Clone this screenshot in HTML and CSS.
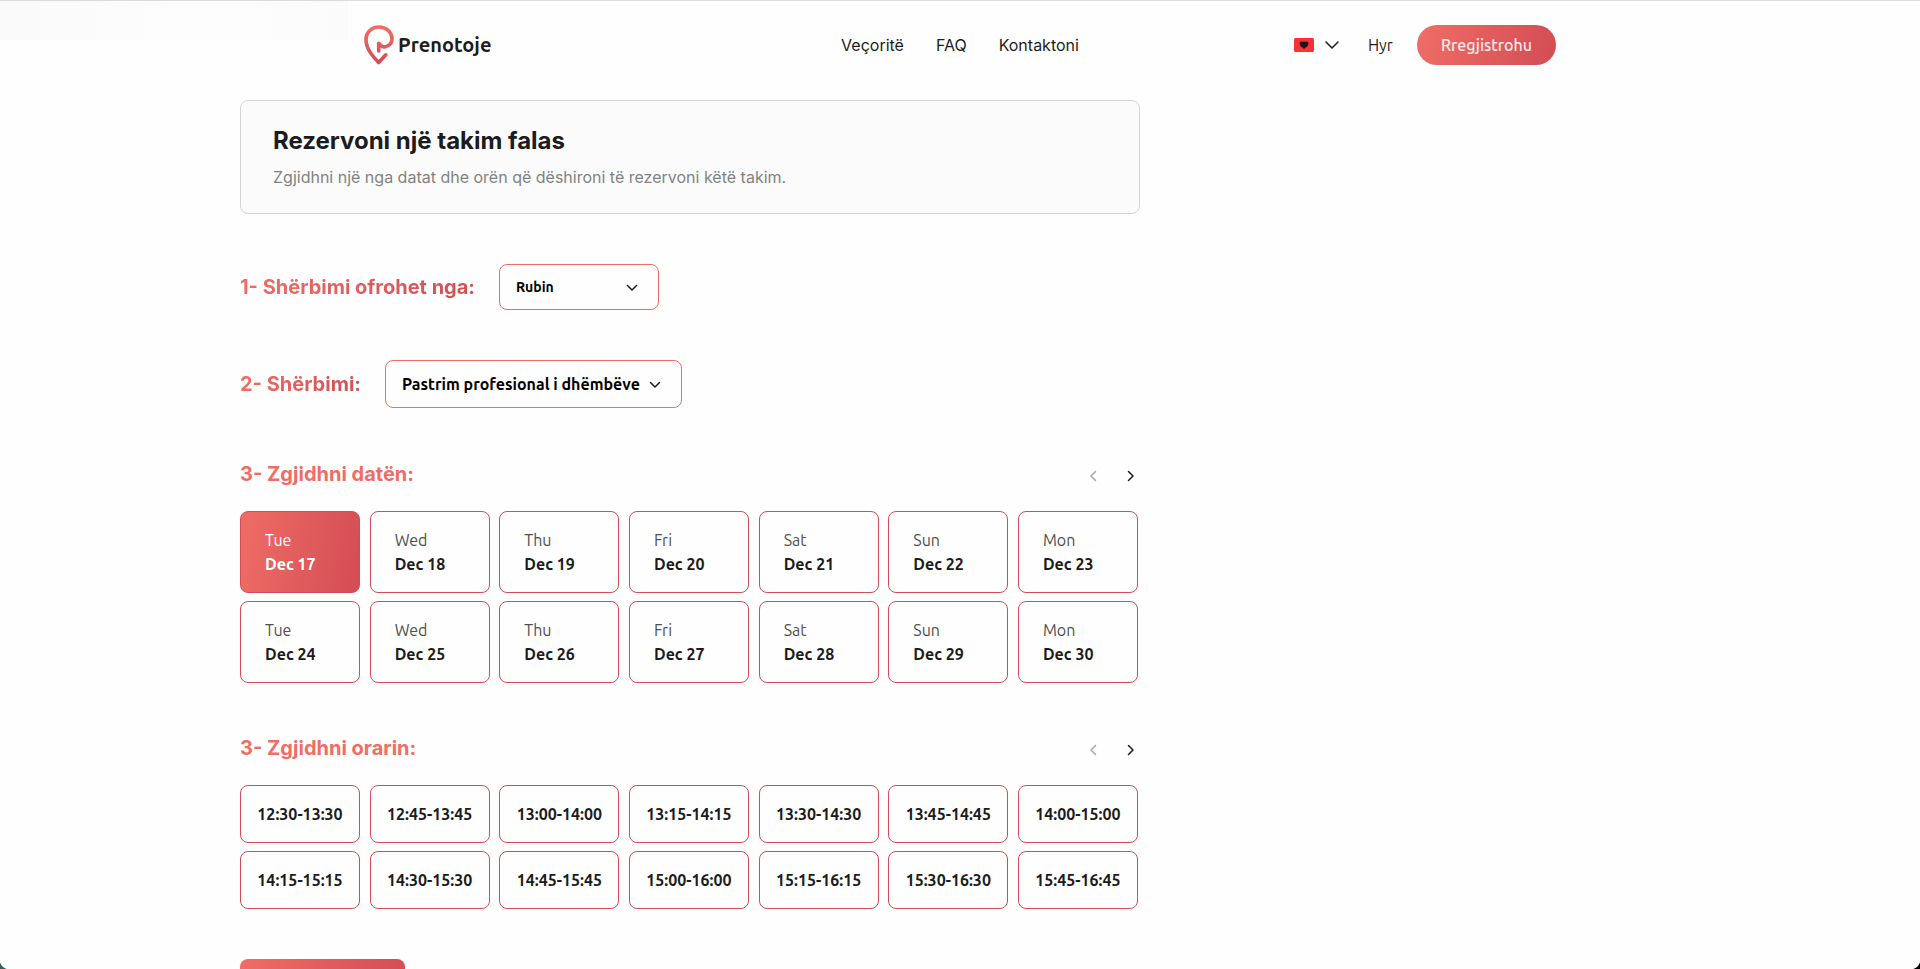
FILE: index.html
```html
<!DOCTYPE html>
<html lang="sq">
<head>
<meta charset="utf-8">
<meta name="viewport" content="width=device-width, initial-scale=1">
<title>Prenotoje</title>
<link rel="stylesheet" href="styles.css">
</head>
<body>
<div class="page">
  <header class="header">
    <div class="header-inner">
      <a class="brand" href="#">
        <svg class="brand-mark" viewBox="0 0 30 40" aria-hidden="true">
          <defs><linearGradient id="pin" x1="0" y1="0" x2="0" y2="1"><stop offset="0" stop-color="#ef6d66"/><stop offset="1" stop-color="#d34d54"/></linearGradient></defs>
          <path fill="none" stroke="url(#pin)" stroke-width="3.600" stroke-linecap="round" stroke-linejoin="round" d="M14.700 26V18.200L18 21.600Q21 22.500 24 20.700Q28 18.500 28 13.500C27.500 6.500 22 2 15 2C7.500 2 2 7.500 2 14.500C2 24 8.500 31 14.700 37.500L21.800 29.800"/>
        </svg>
        <span>Prenotoje</span>
      </a>
      <nav class="nav">
        <a href="#">Veçoritë</a>
        <a href="#">FAQ</a>
        <a href="#">Kontaktoni</a>
      </nav>
      <div class="actions">
        <button class="lang" type="button" aria-label="Shqip">
          <svg width="20" height="14" viewBox="0 0 20 14" aria-hidden="true"><rect width="20" height="14" rx="1.500" fill="#ff2f36"/><path fill="#171717" d="M5.500 4.500L7.500 3.500L9 4L10 3L11 4L12.500 3.500L14.500 4.500L14 7.500L12.500 9L11.500 9.500L10 11L8.500 9.500L7.500 9L6 7.500Z"/></svg>
          <svg width="14" height="8" viewBox="0 0 14 8" aria-hidden="true"><path d="M1 1L7 7L13 1" fill="none" stroke="#1c1c1c" stroke-width="1.500" stroke-linecap="round" stroke-linejoin="round"/></svg>
        </button>
        <a class="login" href="#">Hyr</a>
        <button class="register" type="button">Rregjistrohu</button>
      </div>
    </div>
  </header>

  <main class="main">
    <section class="intro">
      <h1>Rezervoni një takim falas</h1>
      <p>Zgjidhni një nga datat dhe orën që dëshironi të rezervoni këtë takim.</p>
    </section>

    <div class="field">
      <label class="step fade" for="provider">1- Shërbimi ofrohet nga:</label>
      <div class="picker">
        <select id="provider" class="provider"><option>Rubin</option></select>
        <svg viewBox="0 0 12 8" aria-hidden="true"><path d="M1.500 1.500L6 6L10.500 1.500"/></svg>
      </div>
    </div>

    <div class="field">
      <label class="step fade" for="service">2- Shërbimi:</label>
      <div class="picker">
        <select id="service" class="service"><option>Pastrim profesional i dhëmbëve</option></select>
        <svg viewBox="0 0 12 8" aria-hidden="true"><path d="M1.500 1.500L6 6L10.500 1.500"/></svg>
      </div>
    </div>

    <section class="block">
      <div class="block-head">
        <h2 class="step">3- Zgjidhni datën:</h2>
        <div class="pager">
          <button type="button" disabled aria-label="Prapa"><svg viewBox="0 0 8 12"><path d="M6.500 1.500L2 6L6.500 10.500"/></svg></button>
          <button type="button" aria-label="Para"><svg viewBox="0 0 8 12"><path d="M1.500 1.500L6 6L1.500 10.500"/></svg></button>
        </div>
      </div>
      <div class="grid">
        <button type="button" class="date selected"><span>Tue</span><b>Dec 17</b></button>
        <button type="button" class="date"><span>Wed</span><b>Dec 18</b></button>
        <button type="button" class="date"><span>Thu</span><b>Dec 19</b></button>
        <button type="button" class="date"><span>Fri</span><b>Dec 20</b></button>
        <button type="button" class="date"><span>Sat</span><b>Dec 21</b></button>
        <button type="button" class="date"><span>Sun</span><b>Dec 22</b></button>
        <button type="button" class="date"><span>Mon</span><b>Dec 23</b></button>
        <button type="button" class="date"><span>Tue</span><b>Dec 24</b></button>
        <button type="button" class="date"><span>Wed</span><b>Dec 25</b></button>
        <button type="button" class="date"><span>Thu</span><b>Dec 26</b></button>
        <button type="button" class="date"><span>Fri</span><b>Dec 27</b></button>
        <button type="button" class="date"><span>Sat</span><b>Dec 28</b></button>
        <button type="button" class="date"><span>Sun</span><b>Dec 29</b></button>
        <button type="button" class="date"><span>Mon</span><b>Dec 30</b></button>
      </div>
    </section>

    <section class="block">
      <div class="block-head">
        <h2 class="step">3- Zgjidhni orarin:</h2>
        <div class="pager">
          <button type="button" disabled aria-label="Prapa"><svg viewBox="0 0 8 12"><path d="M6.500 1.500L2 6L6.500 10.500"/></svg></button>
          <button type="button" aria-label="Para"><svg viewBox="0 0 8 12"><path d="M1.500 1.500L6 6L1.500 10.500"/></svg></button>
        </div>
      </div>
      <div class="grid">
        <button type="button" class="time">12:30-13:30</button>
        <button type="button" class="time">12:45-13:45</button>
        <button type="button" class="time">13:00-14:00</button>
        <button type="button" class="time">13:15-14:15</button>
        <button type="button" class="time">13:30-14:30</button>
        <button type="button" class="time">13:45-14:45</button>
        <button type="button" class="time">14:00-15:00</button>
        <button type="button" class="time">14:15-15:15</button>
        <button type="button" class="time">14:30-15:30</button>
        <button type="button" class="time">14:45-15:45</button>
        <button type="button" class="time">15:00-16:00</button>
        <button type="button" class="time">15:15-16:15</button>
        <button type="button" class="time">15:30-16:30</button>
        <button type="button" class="time">15:45-16:45</button>
      </div>
    </section>

    <button type="button" class="submit" aria-label="Rezervo"></button>
  </main>
</div>
<div class="corner corner-left"></div>
<div class="corner corner-right"></div>
</body>
</html>
```

FILE: styles.css
```css
:root {
  --coral: #ef6d66;
  --red: #d34d54;
  --ink: #1c1c1c;
  --fade: linear-gradient(100deg, var(--coral), var(--red));
  --ui: Ubuntu, "Noto Sans", sans-serif;
}

* { box-sizing: border-box; }

body {
  margin: 0;
  background: #fefefe;
  color: var(--ink);
  font: 16px/24px Inter, sans-serif;
}

h1, h2, p { margin: 0; }
a { color: inherit; text-decoration: none; }

button, select {
  margin: 0;
  padding: 0;
  border: 0;
  background: none;
  color: inherit;
  font: 16px/24px var(--ui);
}

.page {
  height: 100vh;
  overflow-y: auto;
  scrollbar-width: none;
}

.header {
  border-top: 1px solid #dcdcdc;
  padding: 24px;
  background: linear-gradient(90deg, #fafafa, #fdfdfd 60%, #fbfbfb) 0 0 / 348px 39px no-repeat;
}

.header-inner {
  display: flex;
  align-items: center;
  max-width: 1192px;
  margin: 0 auto;
}

.brand {
  flex: 1;
  display: flex;
  align-items: center;
  gap: 4px;
  font: 600 20px/24px var(--ui);
}

.brand-mark { width: 30px; height: 40px; }

.nav { display: flex; gap: 32px; }

.actions {
  flex: 1;
  display: flex;
  align-items: center;
  justify-content: flex-end;
  gap: 24px;
}

.lang {
  display: flex;
  align-items: center;
  gap: 11px;
  margin-right: 5px;
}

.login { font: 16px/24px var(--ui); }

.register {
  padding: 8px 24px;
  border-radius: 20px;
  background: var(--fade);
  color: #fbeaea;
  font-weight: 500;
}

.main {
  max-width: 1440px;
  margin: 0 auto;
  padding: 11px 0 48px;
  display: flex;
  flex-direction: column;
  align-items: flex-start;
}

.intro, .block {
  width: 100%;
  max-width: 900px;
}

.intro {
  padding: 24px 32px;
  border: 1px solid #d4d4d4;
  border-radius: 8px;
  background: #fbfbfb;
}

.intro h1 { font-size: 24px; line-height: 32px; font-weight: 700; }
.intro p { margin-top: 8px; color: #828282; }

.field {
  display: flex;
  align-items: center;
  gap: 24px;
  margin-top: 50px;
}

.step {
  color: var(--coral);
  font-size: 20px;
  line-height: 28px;
  font-weight: 700;
}

.fade {
  background: var(--fade);
  -webkit-background-clip: text;
  background-clip: text;
  color: transparent;
}

.picker { position: relative; }

.picker select {
  appearance: none;
  padding: 0 36px 0 16px;
  border: 1px solid var(--coral);
  border-radius: 8px;
  color: #000;
  font-weight: 600;
}

.picker .provider { width: 160px; height: 46px; font-size: 14px; }
.picker .service { width: 297px; height: 48px; }

.picker svg {
  position: absolute;
  right: 21px;
  top: 50%;
  width: 12px;
  height: 8px;
  margin-top: -3px;
  pointer-events: none;
}

.picker path, .pager path {
  fill: none;
  stroke: currentColor;
  stroke-width: 1.5;
  stroke-linecap: round;
  stroke-linejoin: round;
}

.block { margin-top: 52px; padding-right: 2px; }

.block-head {
  display: flex;
  justify-content: space-between;
  align-items: center;
}

.pager { display: flex; gap: 19px; padding-top: 4px; }

.pager button {
  display: grid;
  place-items: center;
  width: 24px;
  height: 24px;
}

.pager button:last-child { width: 14px; }
.pager button:disabled { color: #a8a8a8; }
.pager svg { width: 8px; height: 12px; }

.grid {
  display: grid;
  grid-template-columns: repeat(7, 120px);
  justify-content: space-between;
  row-gap: 8px;
  margin-top: 23px;
}

.block + .block { margin-top: 51px; }

.date, .time {
  border: 1px solid var(--red);
  border-radius: 8px;
}

.date {
  display: flex;
  flex-direction: column;
  padding: 16px 24px;
  text-align: left;
}

.date span { color: #505050; }
.date b { font-weight: 600; }

.date.selected { background: var(--fade); color: #fff; }
.date.selected span { color: #fff; }

.time { padding: 16px 0; font-weight: 600; }

.submit {
  width: 165px;
  height: 48px;
  margin-top: 50px;
  border-radius: 8px;
  background: var(--fade);
}

/* rounded window corners */
.corner {
  position: fixed;
  bottom: 0;
  width: 10px;
  height: 10px;
}

.corner-left { left: 0; background: radial-gradient(circle at 100% 0, transparent 10px, #35605f 11px); }
.corner-right { right: 0; background: radial-gradient(circle at 0 0, transparent 10px, #000 11px); }
```
